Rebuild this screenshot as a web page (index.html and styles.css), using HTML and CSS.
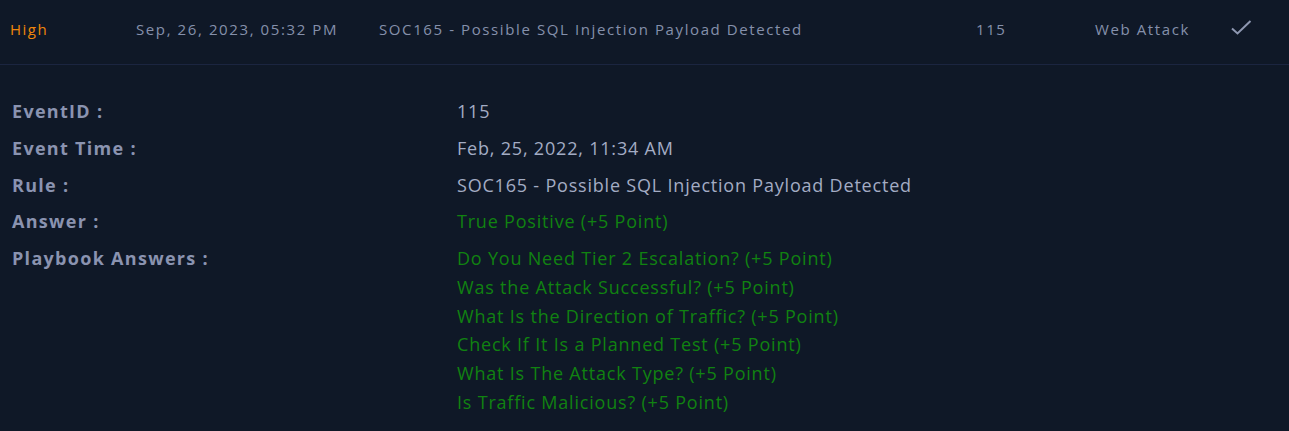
FILE: index.html
```html
<!DOCTYPE html>
<html>
<head>
<meta charset="utf-8">
<link rel="stylesheet" href="styles.css">
</head>
<body>
<div class="page">
  <div class="row">
    <div class="cell sev">High</div>
    <div class="cell date">Sep, 26, 2023, 05:32 PM</div>
    <div class="cell title">SOC165 - Possible SQL Injection Payload Detected</div>
    <div class="cell id">115</div>
    <div class="cell type">Web Attack</div>
    <div class="cell check">
      <svg width="22" height="16" viewBox="0 0 22 16"><path d="M2 9.5 L7.5 14.5 L20.5 2" fill="none" stroke="#8e97b1" stroke-width="2"/></svg>
    </div>
  </div>
  <div class="details">
    <div class="label">EventID :</div><div class="value">115</div>
    <div class="label">Event Time :</div><div class="value">Feb, 25, 2022, 11:34 AM</div>
    <div class="label">Rule :</div><div class="value">SOC165 - Possible SQL Injection Payload Detected</div>
    <div class="label">Answer :</div><div class="value green">True Positive (+5 Point)</div>
    <div class="label">Playbook Answers :</div>
    <div class="value green list">
      <div>Do You Need Tier 2 Escalation? (+5 Point)</div>
      <div>Was the Attack Successful? (+5 Point)</div>
      <div>What Is the Direction of Traffic? (+5 Point)</div>
      <div>Check If It Is a Planned Test (+5 Point)</div>
      <div>What Is The Attack Type? (+5 Point)</div>
      <div>Is Traffic Malicious? (+5 Point)</div>
    </div>
  </div>
</div>
</body>
</html>
```
FILE: styles.css
```css
html, body {
  margin: 0;
  padding: 0;
  background: #0f1827;
}
.page {
  font-family: "Open Sans", "Noto Sans", sans-serif;
  height: 431px;
  overflow: hidden;
}
.row {
  display: flex;
  align-items: center;
  height: 65px;
  padding-bottom: 6px;
  box-sizing: border-box;
  border-bottom: 1px solid #1b2540;
  font-size: 15px;
  letter-spacing: 1.6px;
  color: #8590ab;
}
.cell { white-space: nowrap; }
.sev { color: #f0860a; width: 136px; padding-left: 10px; box-sizing: border-box; letter-spacing: 1.5px; }
.date { width: 243px; }
.title { width: 597px; }
.id { width: 119px; }
.type { width: 135px; }
.check { display: flex; align-items: center; margin-top: -4px; }
.details {
  display: grid;
  grid-template-columns: 445px 1fr;
  padding: 34px 12px 0 12px;
  row-gap: 12.8px;
  font-size: 18px;
  line-height: 24px;
}
.label {
  font-weight: 700;
  color: #8a93b0;
  letter-spacing: 1.3px;
}
.value { color: #a3acc4; letter-spacing: 0.8px; }
.green { color: #118211; }
.list { display: flex; flex-direction: column; gap: 4.7px; }
```
